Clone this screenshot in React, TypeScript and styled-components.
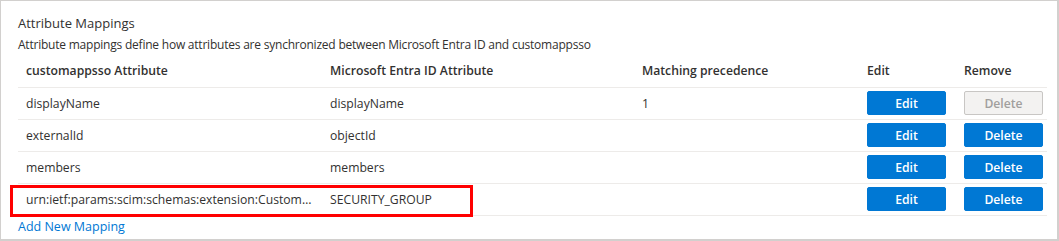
import { FC } from "react";
import styled, { createGlobalStyle } from "styled-components";

const GlobalStyle = createGlobalStyle`
  body {
    margin: 0;
    background: #ffffff;
    font-family: "Segoe UI", "Open Sans", sans-serif;
    color: #323130;
  }
`;

const Panel = styled.section`
  box-sizing: border-box;
  width: 1059px;
  height: 241px;
  border-style: solid;
  border-color: #d2d0ce;
  border-width: 1px 2px 2px 1px;
  padding: 12px 10px 0 17px;
`;

const Title = styled.h3`
  margin: 0;
  font-size: 13px;
  font-weight: 400;
  line-height: 20px;
`;

const Description = styled.p`
  margin: 2px 0 0;
  font-size: 12px;
  letter-spacing: -0.22px;
  line-height: 20px;
`;

const Table = styled.table`
  width: 1029px;
  border-collapse: collapse;
  table-layout: fixed;
  font-size: 12.2px;
`;

const HeadCell = styled.th<{ $width: number }>`
  box-sizing: border-box;
  width: ${(p) => p.$width}px;
  height: 32px;
  padding: 0 8px;
  text-align: left;
  font-weight: 600;
  border-bottom: 1px solid #edebe9;
`;

const Cell = styled.td`
  box-sizing: border-box;
  height: 32px;
  padding: 0 8px;
  border-bottom: 1px solid #edebe9;
  white-space: nowrap;
`;

const AnchorCell = styled(Cell)`
  position: relative;
`;

const Clipped = styled.span`
  display: block;
  overflow: hidden;
  text-overflow: ellipsis;
`;

// annotation drawn over the first two cells of the highlighted row
const Highlight = styled.span`
  position: absolute;
  left: -8px;
  top: 1px;
  width: 463px;
  height: 32px;
  box-sizing: border-box;
  border: 3px solid #ff0000;
  pointer-events: none;
`;

const ActionButton = styled.button<{ $disabled?: boolean }>`
  box-sizing: border-box;
  width: 79px;
  height: 24px;
  padding: 0;
  border-radius: 2px;
  font-family: inherit;
  font-size: 12.2px;
  font-weight: 600;
  cursor: pointer;
  border: 1px solid ${(p) => (p.$disabled ? "#c8c6c4" : "#0078d4")};
  background: ${(p) => (p.$disabled ? "#f3f2f1" : "#0078d4")};
  color: ${(p) => (p.$disabled ? "#a19f9d" : "#ffffff")};
`;

const AddLink = styled.a`
  display: block;
  margin-top: 2px;
  font-size: 12.5px;
  line-height: 18px;
  color: #0078d4;
  cursor: pointer;
`;

interface Mapping {
  target: string;
  source: string;
  precedence?: string;
  canDelete: boolean;
  highlight?: boolean;
}

const mappings: Mapping[] = [
  { target: "displayName", source: "displayName", precedence: "1", canDelete: false },
  { target: "externalId", source: "objectId", canDelete: true },
  { target: "members", source: "members", canDelete: true },
  {
    target: "urn:ietf:params:scim:schemas:extension:CustomExtensionName:2.0:User:SecurityGroup",
    source: "SECURITY_GROUP",
    canDelete: true,
    highlight: true,
  },
];

const App: FC = () => (
  <>
    <GlobalStyle />
    <Panel>
      <Title>Attribute Mappings</Title>
      <Description>
        Attribute mappings define how attributes are synchronized between Microsoft Entra ID and
        customappsso
      </Description>
      <Table>
        <thead>
          <tr>
            <HeadCell $width={304}>customappsso Attribute</HeadCell>
            <HeadCell $width={312}>Microsoft Entra ID Attribute</HeadCell>
            <HeadCell $width={225}>Matching precedence</HeadCell>
            <HeadCell $width={97}>Edit</HeadCell>
            <HeadCell $width={91}>Remove</HeadCell>
          </tr>
        </thead>
        <tbody>
          {mappings.map((m) => (
            <tr key={m.target}>
              <AnchorCell>
                <Clipped>{m.target}</Clipped>
                {m.highlight && <Highlight />}
              </AnchorCell>
              <Cell>{m.source}</Cell>
              <Cell>{m.precedence ?? ""}</Cell>
              <Cell>
                <ActionButton>Edit</ActionButton>
              </Cell>
              <Cell>
                <ActionButton $disabled={!m.canDelete}>Delete</ActionButton>
              </Cell>
            </tr>
          ))}
        </tbody>
      </Table>
      <AddLink>Add New Mapping</AddLink>
    </Panel>
  </>
);

export default App;
